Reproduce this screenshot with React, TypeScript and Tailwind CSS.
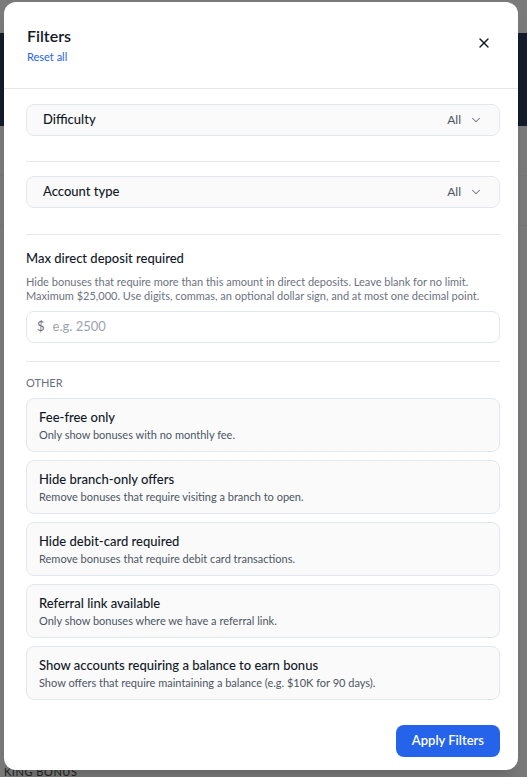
import { X, ChevronDown } from "lucide-react";

const toggles = [
  { title: "Fee-free only", desc: "Only show bonuses with no monthly fee." },
  { title: "Hide branch-only offers", desc: "Remove bonuses that require visiting a branch to open." },
  { title: "Hide debit-card required", desc: "Remove bonuses that require debit card transactions." },
  { title: "Referral link available", desc: "Only show bonuses where we have a referral link." },
  {
    title: "Show accounts requiring a balance to earn bonus",
    desc: "Show offers that require maintaining a balance (e.g. $10K for 90 days).",
  },
];

function SelectRow({ label }: { label: string }) {
  return (
    <button className="w-full h-8 flex items-center justify-between pl-4 pr-4 rounded-lg border border-[#e2e8f0] bg-[#fafafa] text-left">
      <span className="text-[13px] font-medium text-[#111827]">{label}</span>
      <span className="flex items-center gap-2 text-xs text-[#4b5563]">
        All
        <ChevronDown size={14} strokeWidth={1.75} className="text-[#6b7280]" />
      </span>
    </button>
  );
}

export default function App() {
  return (
    <div
      className="relative h-[777px] w-[527px] overflow-hidden bg-[#7b7b7b]"
      style={{ fontFamily: 'Lato, "Noto Sans", sans-serif' }}
    >
      {/* dimmed page behind */}
      <div className="h-[33px]" />
      <div className="h-[93px] bg-[#141b2b]" />
      <div className="h-[50px] border-b border-[#6f7a7c]" />
      <div className="h-[50px] border-b border-[#6f7a7c]" />
      <div className="absolute left-[4px] top-[767px] text-[11px] leading-[10px] tracking-wider text-[#222]">KING BONUS</div>

      {/* modal */}
      <div className="absolute left-[4px] top-[2px] w-[514px] h-[768px] bg-white rounded-xl shadow-xl flex flex-col">
        <div className="flex items-start justify-between pl-[23px] pr-[26px] pt-[22px] pb-[23px] border-b border-[#e5e7eb]">
          <div>
            <h2 className="text-[16px] leading-6 font-semibold text-[#111827]">Filters</h2>
            <button className="block text-[11px] leading-4 text-[#2563eb] mt-px">Reset all</button>
          </div>
          <button className="block mt-[11px] text-[#111827]">
            <X size={16} strokeWidth={2} />
          </button>
        </div>

        <div className="flex-1 pl-[22px] pr-[18px] pt-[15px]">
          <SelectRow label="Difficulty" />
          <div className="border-t border-[#e5e7eb] mt-[25px] mb-[14px]" />
          <SelectRow label="Account type" />
          <div className="border-t border-[#e5e7eb] mt-[26px] mb-[13px]" />

          <h3 className="text-[13px] leading-5 font-medium text-[#111827]">Max direct deposit required</h3>
          <p className="mt-[7px] text-[11px] leading-[14px] text-[#6b7280]">
            Hide bonuses that require more than this amount in direct deposits. Leave blank for no limit.
            <br />
            Maximum $25,000. Use digits, commas, an optional dollar sign, and at most one decimal point.
          </p>
          <div className="mt-[8px] h-8 flex items-center gap-2 px-[10px] rounded-lg border border-[#e2e8f0] bg-white text-[13px]">
            <span className="text-[#6b7280]">$</span>
            <span className="text-[#9ca3af]">e.g. 2500</span>
          </div>
          <div className="border-t border-[#e5e7eb] mt-[18px] mb-[13px]" />

          <div className="text-[11px] leading-4 text-[#6b7280] uppercase">Other</div>
          <div className="mt-[7px] flex flex-col gap-2">
            {toggles.map((t) => (
              <div key={t.title} className="rounded-lg border border-[#e2e8f0] bg-[#fafafa] px-3 py-2">
                <div className="text-[13px] leading-5 font-medium text-[#111827]">{t.title}</div>
                <div className="text-[11px] leading-4 text-[#4b5563]">{t.desc}</div>
              </div>
            ))}
          </div>
        </div>

        <div className="flex justify-end pr-[18px] pb-[13px]">
          <button className="h-8 px-4 rounded-lg bg-[#2563eb] text-white text-[13px] font-semibold">
            Apply Filters
          </button>
        </div>
      </div>
    </div>
  );
}
